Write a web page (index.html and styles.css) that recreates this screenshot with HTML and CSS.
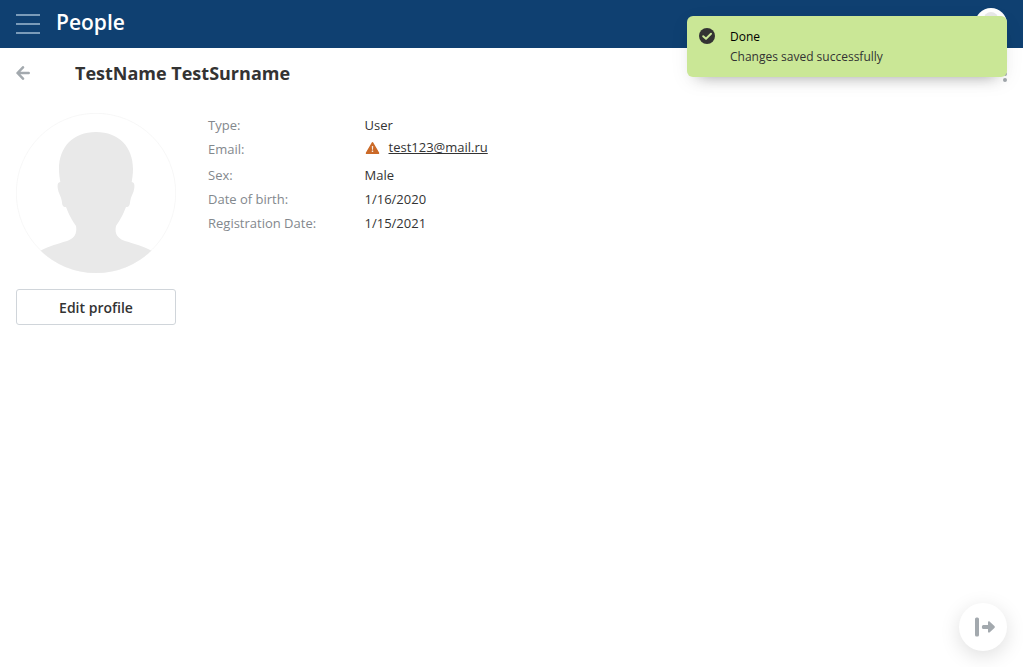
FILE: index.html
```html
<!DOCTYPE html>
<html lang="en">
<head>
<meta charset="utf-8">
<title>People</title>
<link rel="stylesheet" href="styles.css">
</head>
<body>
<header class="topbar">
  <svg class="menu" width="24" height="20" viewBox="0 0 24 20"><path d="M0 0h24v2H0zM0 9h24v2H0zM0 18h24v2H0z" fill="#7a9bb9"/></svg>
  <span class="brand">People</span>
  <svg class="account" width="32" height="32" viewBox="0 0 32 32"><circle cx="16" cy="16" r="16" fill="#fff"/><ellipse cx="16" cy="12" rx="7.5" ry="8" fill="#e9e9e9"/></svg>
</header>
<main class="page">
  <div class="heading">
    <svg class="back" width="14" height="14" viewBox="0 0 14 14"><path d="M7 1.300 1.500 7 7 12.700M2 7h10.700" fill="none" stroke="#a3a9ae" stroke-width="2.500" stroke-linecap="round" stroke-linejoin="round"/></svg>
    <h1 class="name">TestName TestSurname</h1>
    <svg class="more" width="4" height="16" viewBox="0 0 4 16"><g fill="#a3a9ae"><circle cx="2" cy="2" r="2"/><circle cx="2" cy="8" r="2"/><circle cx="2" cy="14" r="2"/></g></svg>
  </div>
  <div class="profile">
    <div class="side">
      <svg class="avatar" width="160" height="160" viewBox="0 0 160 160">
        <defs><clipPath id="round"><circle cx="80" cy="80" r="80"/></clipPath></defs>
        <circle cx="80" cy="80" r="79.7" fill="#fff" stroke="#f1f1f1" stroke-width=".6"/>
        <path clip-path="url(#round)" fill="#e9e9e9" d="M80 19C57 19 43 34 43 56c0 5 .7 9 1.300 13-2.800.3-2.900 3-2.600 6 .5 5 3.300 8 4.100 13 .5 4 .7 6 4.200 6 3 8 6 13 10 19 1.500 9-3 13-9 15-10 3-18 5-27 10v30h112v-30c-9-5-17-7-27-10-6-2-11-6-9-15 4-6 7-11 10-19 3.500 0 3.700-2 4.200-6 .8-5 3.600-8 4.100-13 .3-3 .2-5.700-2.600-6 .6-4 1.300-8 1.300-13C117 34 103 19 80 19z"/>
      </svg>
      <button class="edit">Edit profile</button>
    </div>
    <dl class="info">
      <div class="row"><dt>Type:</dt><dd>User</dd></div>
      <div class="row row-email"><dt>Email:</dt><dd>
        <svg class="warning" width="14" height="12" viewBox="0 0 14 12"><path d="M7 .7 13.300 11.300H.7z" fill="#cb6a28" stroke="#cb6a28" stroke-width="1.300" stroke-linejoin="round"/><path d="M6.300 4h1.400l-.2 3.700h-1zM6.300 8.500h1.400v1.400H6.300z" fill="#fff" fill-opacity=".85"/></svg>
        <a class="mail">test123@mail.ru</a></dd></div>
      <div class="row"><dt>Sex:</dt><dd>Male</dd></div>
      <div class="row"><dt>Date of birth:</dt><dd>1/16/2020</dd></div>
      <div class="row"><dt>Registration Date:</dt><dd>1/15/2021</dd></div>
    </dl>
  </div>
</main>
<aside class="toast">
  <svg class="check" width="16" height="16" viewBox="0 0 16 16"><circle cx="8" cy="8" r="8" fill="#333"/><path d="M4.200 8.200 7 10.700l5-4.900" fill="none" stroke="#cae796" stroke-width="2" stroke-linecap="round" stroke-linejoin="round"/></svg>
  <div>
    <div class="toast-title">Done</div>
    <div class="toast-text">Changes saved successfully</div>
  </div>
</aside>
<div class="fab">
  <svg width="20" height="20" viewBox="0 0 20 20"><rect x="0" y=".5" width="4" height="19" rx="1.500" fill="#a3a9ae"/><path d="M8.200 8H13V5.500c0-1.200 1-1.500 1.800-.8l4.600 4.300c.6.600.6 1.300 0 1.900l-4.600 4.400c-.8.700-1.800.4-1.800-.8V12H8.200C6.500 12 6.500 8 8.200 8z" fill="#a3a9ae"/></svg>
</div>
</body>
</html>
```
FILE: styles.css
```css
body {
  margin: 0;
  height: 667px;
  overflow: hidden;
  background: #fff;
  color: #333;
  font: 13px/20px "Open Sans", sans-serif;
}
svg { display: block; flex: none; }
.topbar {
  display: flex;
  align-items: center;
  box-sizing: border-box;
  height: 48px;
  padding: 0 16px;
  background: #0f4071;
}
.brand {
  margin: -5px 0 0 16px;
  color: #fff;
  font-size: 21px;
  font-weight: 600;
  line-height: 28px;
}
.account { margin-left: auto; }
.page { padding: 0 16px; }
.heading { display: flex; align-items: center; height: 50px; }
.name {
  flex: 1;
  margin: 0 0 0 45px;
  font-size: 18px;
  font-weight: 700;
  line-height: 24px;
}
.more { margin: 2px 0 0; }
.profile { display: flex; gap: 32px; padding-top: 15px; }
.side { width: 160px; }
.edit {
  display: block;
  box-sizing: border-box;
  width: 160px;
  height: 36px;
  margin-top: 16px;
  padding: 2px 0 0;
  border: 1px solid #d0d5da;
  border-radius: 3px;
  background: #fff;
  color: #333;
  font: 600 14px/20px "Open Sans", sans-serif;
}
.info { margin: 2px 0 0; }
.row { display: flex; height: 24px; }
.row-email { height: 26px; }
.row dt { width: 156.500px; color: #83888d; }
.row dd { display: flex; margin: 0; }
.row-email dd { margin-top: -2px; }
.warning { margin: 5px 8.500px 0 1.500px; transform: translateX(-.5px); }
.mail { text-decoration: underline; }
.toast {
  position: absolute;
  top: 16px;
  left: 687px;
  display: flex;
  gap: 15px;
  box-sizing: border-box;
  width: 320px;
  height: 61px;
  padding: 11px 12px;
  border-radius: 6px;
  background: #cae796;
  box-shadow: 0 10px 16px -12px rgba(0, 0, 0, .4), 0 5px 20px rgba(0, 0, 0, .06);
  font-size: 12px;
}
.check { margin-top: 1px; }
.toast-title { color: #000; }
.fab {
  position: absolute;
  top: 603px;
  left: 959px;
  display: flex;
  align-items: center;
  justify-content: center;
  width: 48px;
  height: 48px;
  padding-left: 3px;
  box-sizing: border-box;
  border-radius: 50%;
  background: #fff;
  box-shadow: 0 5px 20px rgba(0, 0, 0, .13);
}
```
